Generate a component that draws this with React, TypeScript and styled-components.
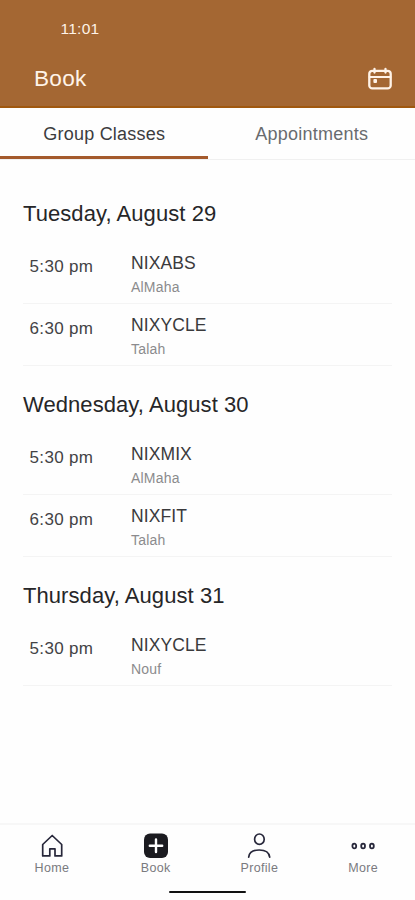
import React from "react";
import styled, { createGlobalStyle } from "styled-components";

const GlobalStyle = createGlobalStyle`
  * { box-sizing: border-box; }
  body {
    margin: 0;
    background: #fefefe;
    font-family: "Liberation Sans", Arial, sans-serif;
    color: #262628;
  }
  button { font: inherit; color: inherit; background: none; border: 0; padding: 0; }
  svg { display: block; }
`;

const Screen = styled.div`
  display: flex;
  flex-direction: column;
  width: 415px;
  height: 900px;
  overflow: hidden;
  background: #fefefe;
`;

const Header = styled.header`
  flex: none;
  height: 108px;
  background: #a46733;
  border-bottom: 2px solid #a0580f;
  color: #fff3e8;
`;

const Clock = styled.div`
  padding: 19px 0 0 60.5px;
  font-size: 15.5px;
  letter-spacing: 0.25px;
  line-height: 20px;
  height: 60px;
`;

const TitleBar = styled.div`
  display: flex;
  justify-content: space-between;
  align-items: center;
  height: 38px;
  padding: 0 23px 0 34px;
`;

const Title = styled.h1`
  margin: 0;
  font-size: 22.6px;
  font-weight: 400;
  letter-spacing: 0.3px;
  line-height: 28px;
`;

const Tabs = styled.nav`
  display: flex;
  flex: none;
  height: 52px;
  border-bottom: 1px solid #f0f0f0;
`;

const Tab = styled.button<{ $active?: boolean }>`
  flex: 1;
  height: 51px;
  border-bottom: 3px solid ${(p) => (p.$active ? "#a45a2c" : "transparent")};
  font-size: 18px;
  letter-spacing: 0.23px;
  line-height: 48px;
  padding: 2px 0 0 1px;
  color: ${(p) => (p.$active ? "#3c3c3e" : "#686b6f")};
`;

const Schedule = styled.main`
  flex: 1;
  min-height: 0;
  padding: 40px 23px 0;
`;

const Day = styled.section`
  padding-bottom: 25px;
`;

const DayTitle = styled.h2`
  margin: 0;
  height: 42px;
  font-size: 22px;
  font-weight: 400;
  line-height: 28px;
  letter-spacing: 0.07px;
`;

const ClassRow = styled.div`
  display: flex;
  height: 62px;
  padding-left: 6.5px;
  border-bottom: 1px solid #f4f4f4;
`;

const Time = styled.div`
  width: 101.5px;
  padding-top: 14px;
  font-size: 17px;
  letter-spacing: 0.35px;
  line-height: 22px;
  color: #434345;
`;

const ClassName = styled.div`
  padding-top: 10px;
  font-size: 17.5px;
  letter-spacing: 0.1px;
  line-height: 22px;
  color: #3a3a3c;
`;

const Coach = styled.div`
  padding-top: 4px;
  font-size: 14px;
  line-height: 18px;
  letter-spacing: 0.2px;
  color: #8b8b8d;
`;

const BottomNav = styled.nav`
  display: flex;
  flex: none;
  height: 62px;
  border-top: 2px solid #f7f7f7;
`;

const NavItem = styled.button`
  flex: 1;
  display: flex;
  flex-direction: column;
  align-items: center;
  padding-top: 7px;
  font-size: 12.5px;
  line-height: 16px;
  letter-spacing: 0.3px;
  color: #7a7a7e;
`;

const HomeBar = styled.div`
  flex: none;
  height: 15px;
  display: flex;
  justify-content: center;
  padding-top: 6px;
  &::before {
    content: "";
    width: 77px;
    height: 2px;
    border-radius: 1px;
    background: #111;
  }
`;

const CalendarIcon = () => (
  <svg width="24" height="24" viewBox="0 0 24 24" fill="none" stroke="#fff3e8" strokeWidth="2.3" strokeLinecap="round">
    <rect x="1.3" y="3.8" width="21.4" height="17.6" rx="3" />
    <path d="M1.5 10H22.5" strokeWidth="1.8" />
    <path d="M6.5 2V5.5M17.5 2V5.5" />
    <rect x="5.4" y="12" width="3.6" height="4" rx="1" fill="#fff3e8" stroke="none" />
  </svg>
);

const iconProps = { width: 24, height: 28, viewBox: "0 0 24 28", fill: "none", stroke: "#27273a", strokeWidth: 1.7 };

const HomeIcon = () => (
  <svg {...iconProps}>
    <path d="M2.7 12.5L12.2 3.5L21.7 12.5V23.9H15V16.8H9.8V23.9H2.7Z" strokeLinejoin="round" />
  </svg>
);

const BookIcon = () => (
  <svg {...iconProps}>
    <rect x="0" y="1.5" width="24" height="24.5" rx="6" fill="#1b1b20" stroke="none" />
    <path d="M12 7.5V20.1M5.8 13.8H18.2" stroke="#fff" strokeWidth="2.4" strokeLinecap="round" />
  </svg>
);

const ProfileIcon = () => (
  <svg {...iconProps}>
    <ellipse cx="12.4" cy="7.2" rx="4.8" ry="5.2" />
    <path d="M1.7 25.2C2.2 20.5 6.2 18 12.2 18S22.2 20.5 22.7 25.2" strokeLinecap="round" />
  </svg>
);

const MoreIcon = () => (
  <svg {...iconProps} strokeWidth={1.8}>
    <ellipse cx="3.3" cy="14" rx="1.9" ry="2.4" />
    <ellipse cx="12.1" cy="14" rx="1.9" ry="2.4" />
    <ellipse cx="20.9" cy="14" rx="1.9" ry="2.4" />
  </svg>
);

const days = [
  {
    title: "Tuesday, August 29",
    classes: [
      { time: "5:30 pm", name: "NIXABS", coach: "AlMaha" },
      { time: "6:30 pm", name: "NIXYCLE", coach: "Talah" },
    ],
  },
  {
    title: "Wednesday, August 30",
    classes: [
      { time: "5:30 pm", name: "NIXMIX", coach: "AlMaha" },
      { time: "6:30 pm", name: "NIXFIT", coach: "Talah" },
    ],
  },
  {
    title: "Thursday, August 31",
    classes: [{ time: "5:30 pm", name: "NIXYCLE", coach: "Nouf" }],
  },
];

const navItems = [
  { label: "Home", Icon: HomeIcon },
  { label: "Book", Icon: BookIcon },
  { label: "Profile", Icon: ProfileIcon },
  { label: "More", Icon: MoreIcon },
];

export default function App() {
  return (
    <>
      <GlobalStyle />
      <Screen>
        <Header>
          <Clock>11:01</Clock>
          <TitleBar>
            <Title>Book</Title>
            <CalendarIcon />
          </TitleBar>
        </Header>
        <Tabs>
          <Tab $active>Group Classes</Tab>
          <Tab>Appointments</Tab>
        </Tabs>
        <Schedule>
          {days.map((day) => (
            <Day key={day.title}>
              <DayTitle>{day.title}</DayTitle>
              {day.classes.map((item) => (
                <ClassRow key={item.time}>
                  <Time>{item.time}</Time>
                  <div>
                    <ClassName>{item.name}</ClassName>
                    <Coach>{item.coach}</Coach>
                  </div>
                </ClassRow>
              ))}
            </Day>
          ))}
        </Schedule>
        <BottomNav>
          {navItems.map(({ label, Icon }) => (
            <NavItem key={label}>
              <Icon />
              {label}
            </NavItem>
          ))}
        </BottomNav>
        <HomeBar />
      </Screen>
    </>
  );
}
